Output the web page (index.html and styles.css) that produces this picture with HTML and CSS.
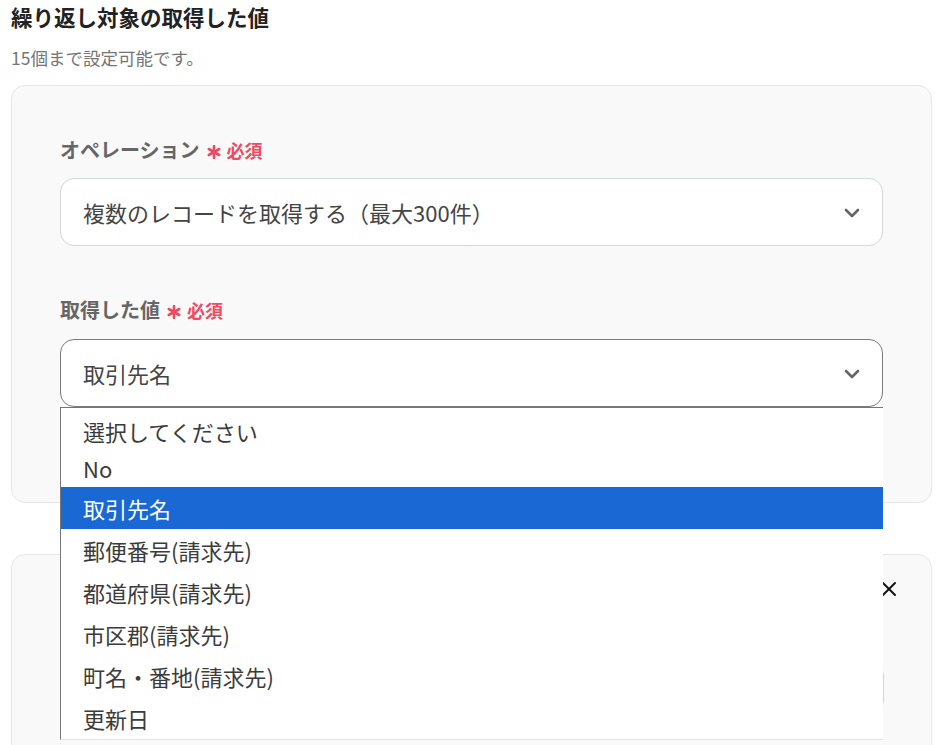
FILE: index.html
```html
<!DOCTYPE html>
<html lang="ja">
<head>
<meta charset="utf-8">
<link rel="stylesheet" href="styles.css">
</head>
<body>
<div class="page">
  <h2 class="title">繰り返し対象の取得した値</h2>
  <p class="sub">15個まで設定可能です。</p>

  <div class="card card-main">
    <div class="label">オペレーション<span class="req"><svg class="ast" viewBox="0 0 14 14" width="14" height="14"><g stroke="#ee4a60" stroke-width="2.6" stroke-linecap="round"><line x1="7" y1="1" x2="7" y2="13"/><line x1="1.8" y1="4" x2="12.2" y2="10"/><line x1="1.8" y1="10" x2="12.2" y2="4"/></g></svg>必須</span></div>
    <div class="select">
      <span class="val">複数のレコードを取得する（最大300件）</span>
      <svg class="chev" viewBox="0 0 16 10" width="16" height="10"><path d="M2 2 L8 8 L14 2" fill="none" stroke="#666" stroke-width="2.6" stroke-linecap="round" stroke-linejoin="round"/></svg>
    </div>

    <div class="label label-2">取得した値<span class="req"><svg class="ast" viewBox="0 0 14 14" width="14" height="14"><g stroke="#ee4a60" stroke-width="2.6" stroke-linecap="round"><line x1="7" y1="1" x2="7" y2="13"/><line x1="1.8" y1="4" x2="12.2" y2="10"/><line x1="1.8" y1="10" x2="12.2" y2="4"/></g></svg>必須</span></div>
    <div class="select-wrap">
      <div class="select select-open">
        <span class="val">取引先名</span>
        <svg class="chev" viewBox="0 0 16 10" width="16" height="10"><path d="M2 2 L8 8 L14 2" fill="none" stroke="#666" stroke-width="2.6" stroke-linecap="round" stroke-linejoin="round"/></svg>
      </div>
      <ul class="options">
        <li class="opt opt-first">選択してください</li>
        <li class="opt opt-short">No</li>
        <li class="opt opt-active">取引先名</li>
        <li class="opt">郵便番号(請求先)</li>
        <li class="opt">都道府県(請求先)</li>
        <li class="opt">市区郡(請求先)</li>
        <li class="opt">町名・番地(請求先)</li>
        <li class="opt">更新日</li>
      </ul>
    </div>
  </div>

  <div class="card card-second">
    <div class="card-head">
      <svg class="close" viewBox="0 0 16 16" width="16" height="16"><g stroke="#111" stroke-width="2" stroke-linecap="round"><line x1="2" y1="2" x2="14" y2="14"/><line x1="14" y1="2" x2="2" y2="14"/></g></svg>
    </div>
    <div class="input-box"></div>
  </div>
</div>
</body>
</html>
```

FILE: styles.css
```css
* { box-sizing: border-box; }

html, body {
  margin: 0;
  padding: 0;
  background: #ffffff;
}

body {
  font-family: "Noto Sans CJK JP", "Noto Sans", sans-serif;
  overflow: hidden;
  height: 745px;
}

.page {
  padding: 0 9px 0 11px;
}

.title {
  margin: 0;
  padding-top: 3px;
  font-size: 21.5px;
  line-height: 28px;
  font-weight: 700;
  color: #222;
}

.sub {
  margin: 15px 0 0;
  font-size: 17.5px;
  line-height: 24px;
  color: #757575;
}

.card {
  background: #f9f9f9;
  border: 1px solid #e6e6e6;
  border-radius: 14px;
}

.card-main {
  margin-top: 15px;
  padding: 49px 48px 95px 48px;
  height: 418px;
}

.label {
  display: flex;
  align-items: center;
  font-size: 20px;
  line-height: 30px;
  font-weight: 700;
  color: #666;
  margin-bottom: 13px;
}

.label-2 {
  margin-top: 49px;
  margin-bottom: 14px;
}

.req {
  display: inline-flex;
  align-items: center;
  margin-left: 7px;
  color: #ee4a60;
  font-size: 18px;
  font-weight: 700;
}

.ast {
  margin: 4px 6px 0 0;
}

.select {
  height: 68px;
  background: #fff;
  border: 1px solid #d3d6dd;
  border-radius: 14px;
  display: flex;
  align-items: center;
  justify-content: space-between;
  padding: 0 22px 0 22px;
}

.select-open {
  border-color: #7a7a7a;
}

.val {
  font-size: 22px;
  color: #444;
}

.chev {
  margin-top: 2px;
}

.select-wrap {
  position: relative;
}

.options {
  position: absolute;
  left: 0;
  top: 100%;
  width: 823px;
  margin: 0;
  padding: 0;
  list-style: none;
  background: #fff;
  border-top: 1px solid #767676;
  border-left: 1px solid #767676;
  border-bottom: 1px solid #e2e2e2;
  z-index: 5;
}

.opt {
  height: 42px;
  line-height: 42px;
  padding-left: 22px;
  font-size: 22px;
  color: #3b3b3b;
}

.opt-first {
  padding-top: 4px;
  line-height: 38px;
}

.opt-short {
  height: 37px;
  line-height: 37px;
}

.opt-active {
  background: #1a68d3;
  color: #fff;
}

.card-second {
  margin-top: 51px;
  height: 300px;
  padding: 0 34px 0 48px;
}

.card-head {
  display: flex;
  justify-content: flex-end;
  padding-top: 26px;
}

.input-box {
  margin-top: 70px;
  width: 824px;
  height: 42px;
  background: #fff;
  border: 1px solid #d3d6dd;
  border-radius: 8px;
}
```
